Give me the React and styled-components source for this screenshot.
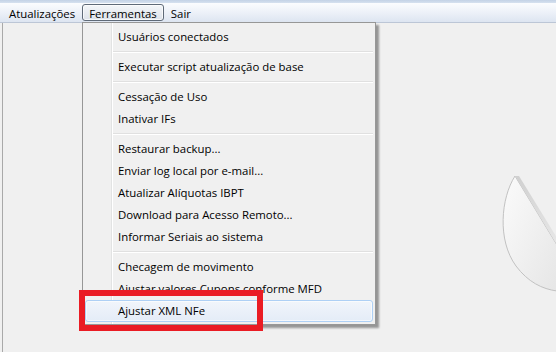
import React from "react";
import styled, { createGlobalStyle, css } from "styled-components";

const GlobalStyle = createGlobalStyle`
  html, body { margin: 0; padding: 0; background: #f0f0f0; }
  body { font-family: "Segoe UI", "Open Sans", "Noto Sans", sans-serif; font-size: 11.4px; color: #000; }
`;

const Window = styled.div`
  position: relative;
  width: 556px;
  height: 352px;
  overflow: hidden;
  background: #f0f0f0;
  display: flex;
  flex-direction: column;
`;

const TopStrip = styled.div`
  height: 3px;
  background: linear-gradient(to bottom, #c3d2e6, #d6e1ef);
`;

const MenuBar = styled.div`
  height: 19px;
  display: flex;
  align-items: center;
  padding-left: 2px;
  background: linear-gradient(to bottom, #fbfcfe 0%, #eef2f9 45%, #dde5f1 100%);
  border-bottom: 1px solid #bcc6d6;
`;

const MenuBarItem = styled.div`
  height: 17px;
  line-height: 17px;
  padding: 0 6px;
  box-sizing: border-box;
  border: 1px solid transparent;
  border-radius: 3px;
  white-space: nowrap;
  ${(p) =>
    p.$open &&
    css`
      border-color: #5f6a78;
      background: linear-gradient(to bottom, #f4f6f9, #dde2ea);
      box-shadow: inset 0 0 0 1px rgba(255, 255, 255, 0.7);
    `}
`;

const Content = styled.div`
  flex: 1;
  margin-left: 2px;
  border-left: 1px solid #a9a9a9;
  position: relative;
`;

const Dropdown = styled.div`
  position: absolute;
  left: 79px;
  top: -1px;
  width: 294px;
  box-sizing: border-box;
  padding: 3px 2px 2px 2px;
  border: 1px solid #979797;
  background:
    linear-gradient(to right, transparent 28px, #e2e3e3 28px, #e2e3e3 29px, #ffffff 29px, #ffffff 30px, transparent 30px),
    #f0f0f0;
  box-shadow: 3px 3px 2px rgba(0, 0, 0, 0.38);
  display: flex;
  flex-direction: column;
`;

const Item = styled.div`
  height: 22px;
  line-height: 19px;
  padding-left: 32px;
  box-sizing: border-box;
  border: 1px solid transparent;
  border-radius: 3px;
  white-space: nowrap;
  ${(p) =>
    p.$hover &&
    css`
      border-color: #aed0f5;
      background: linear-gradient(to bottom, #f1f5fb, #e4ecf7);
      box-shadow: inset 0 0 0 1px rgba(255, 255, 255, 0.6);
    `}
`;

const Separator = styled.div`
  height: 8px;
  display: flex;
  flex-direction: column;
  justify-content: center;
  padding-left: 28px;
  &::before {
    content: "";
    height: 1px;
    background: #e0e0e0;
  }
  &::after {
    content: "";
    height: 1px;
    background: #ffffff;
  }
`;

const Highlight = styled.div`
  position: absolute;
  left: 76px;
  top: 267px;
  width: 184px;
  height: 41px;
  box-sizing: border-box;
  border: 6px solid #ea1c24;
`;

const Decor = styled.svg`
  position: absolute;
  right: 0;
  top: 147px;
`;

const groups = [
  ["Usuários conectados"],
  ["Executar script atualização de base"],
  ["Cessação de Uso", "Inativar IFs"],
  [
    "Restaurar backup...",
    "Enviar log local por e-mail...",
    "Atualizar Alíquotas IBPT",
    "Download para Acesso Remoto...",
    "Informar Seriais ao sistema",
  ],
  ["Checagem de movimento", "Ajustar valores Cupons conforme MFD", "Ajustar XML NFe"],
];

export default function App() {
  return (
    <Window>
      <GlobalStyle />
      <TopStrip />
      <MenuBar>
        <MenuBarItem>Atualizações</MenuBarItem>
        <MenuBarItem $open>Ferramentas</MenuBarItem>
        <MenuBarItem>Sair</MenuBarItem>
      </MenuBar>
      <Content>
        <Decor width="60" height="150" viewBox="496 170 60 150">
          <defs>
            <linearGradient id="lens" x1="0" y1="0" x2="1" y2="1">
              <stop offset="0" stopColor="#fbfbfb" />
              <stop offset="1" stopColor="#e6e6e6" />
            </linearGradient>
            <linearGradient id="bevel" x1="0" y1="0" x2="0" y2="1">
              <stop offset="0" stopColor="#d0d0d0" />
              <stop offset="1" stopColor="#e8e8e8" />
            </linearGradient>
          </defs>
          <path
            d="M515,176 C501,198 497,240 516,266 C528,282 542,289 557,291 L557,245 Z"
            fill="url(#lens)"
            stroke="#c2c2c2"
            strokeWidth="1"
          />
          <path d="M515,176 L519,176 L557,238 L557,245 Z" fill="url(#bevel)" />
        </Decor>
        <Dropdown>
          {groups.map((g, gi) => (
            <React.Fragment key={gi}>
              {gi > 0 && <Separator />}
              {g.map((label) => (
                <Item key={label} $hover={label === "Ajustar XML NFe"}>
                  {label}
                </Item>
              ))}
            </React.Fragment>
          ))}
        </Dropdown>
        <Highlight />
      </Content>
    </Window>
  );
}
